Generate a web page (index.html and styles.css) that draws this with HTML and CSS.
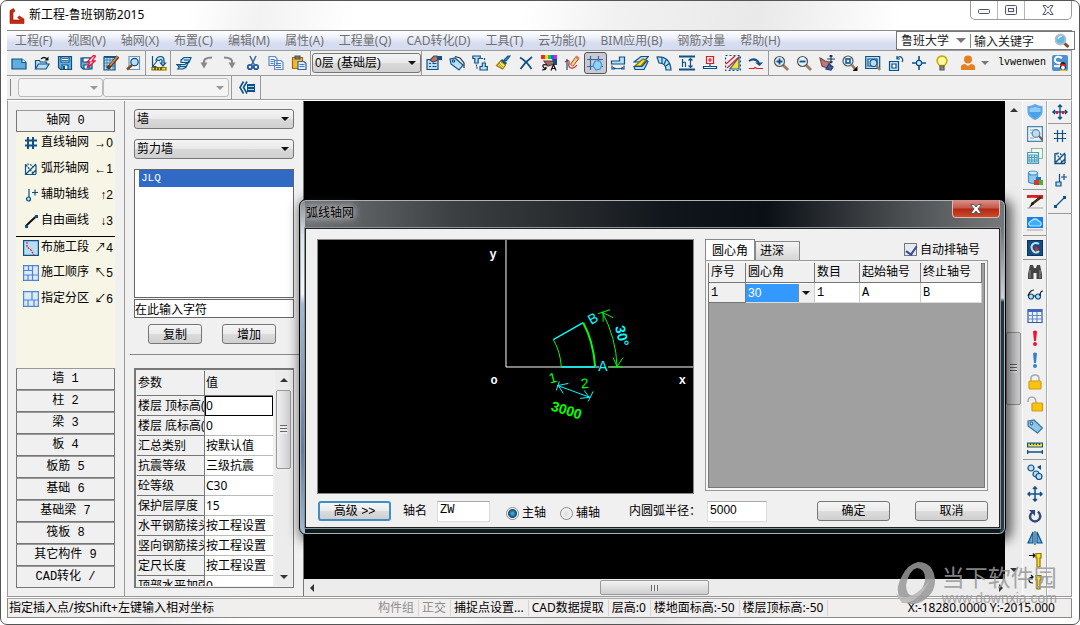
FILE: index.html
```html
<!DOCTYPE html>
<html lang="zh-CN">
<head>
<meta charset="utf-8">
<title>新工程-鲁班钢筋2015</title>
<link rel="stylesheet" href="styles.css">
</head>
<body>
<div class="window">
  <header class="titlebar">
    <svg class="logo" viewBox="0 0 16 16"><path d="M1 2.500L4.500.500 6 3 4 4.500V12h7.500l-3-2.500 2-1.500 4.500 3v4.500H1z" fill="#c8290f" stroke="#8f1c08" stroke-width=".6"/></svg>
    <h1 class="title">新工程-鲁班钢筋2015</h1>
    <div class="winctl">
      <button class="wc" aria-label="最小化"><svg viewBox="0 0 14 12"><rect x="1.500" y="5.500" width="11" height="4" rx="1"/></svg></button>
      <button class="wc" aria-label="还原"><svg viewBox="0 0 14 12"><rect x="1.500" y="1.500" width="11" height="9" rx="1"/><rect x="4.500" y="4.500" width="5" height="3"/></svg></button>
      <button class="wc wide" aria-label="关闭"><svg viewBox="0 0 14 12"><path d="M2 1.500h3L7 4l2-2.500h3L9 6l3 4.500H9L7 8l-2 2.500H2L5 6z"/></svg></button>
    </div>
  </header>

  <nav class="menubar">
    <button>工程(F)</button><button>视图(V)</button><button>轴网(X)</button><button>布置(C)</button><button>编辑(M)</button><button>属性(A)</button><button>工程量(Q)</button><button>CAD转化(D)</button><button>工具(T)</button><button>云功能(I)</button><button>BIM应用(B)</button><button>钢筋对量</button><button>帮助(H)</button>
    <div class="search">
      <button class="scope">鲁班大学<span class="tri"></span></button>
      <input type="text" value="输入关键字" aria-label="搜索">
      <svg class="i" viewBox="0 0 16 16"><path d="M10 10l4.500 4" stroke="#7a4a2a" stroke-width="3"/><circle cx="6.500" cy="6.500" r="5" fill="#5fb8ea" stroke="#b8bfc6" stroke-width="1.800"/><path d="M4 6q1-3 4-2.500" stroke="#e3f4fd"/></svg>
    </div>
  </nav>

  <div class="toolbar">
    <button class="t" aria-label="新建"><svg class="i" viewBox="0 0 16 16"><path class="mb" d="M1 4h10l4 3.500V14H1z"/><path d="M11 4v3.500h4" fill="#fff"/></svg></button>
    <button class="t" aria-label="打开"><svg class="i" viewBox="0 0 16 16"><path class="lb" d="M1.500 14V5.500h4l1 1.500h6v2"/><path class="lb" d="M1.500 14l3-5h10.500l-3 5z"/><path d="M7 4q3-3 6 0" class="k"/><path class="kf" d="M14.500 1.500v4h-4z"/></svg></button>
    <button class="t" aria-label="保存"><svg class="i" viewBox="0 0 16 16"><path class="mb" d="M1.500 1.500h13v13h-11l-2-2z"/><path fill="#fff" d="M4 2h8v5H4z"/><path d="M5 3.500h6M5 5.500h6" stroke-width=".8"/><path fill="#e8f3fb" d="M5 10h6v4.500H5z"/><path class="db" d="M6 11h2v3H6z"/></svg></button>
    <button class="t" aria-label="另存"><svg class="i" viewBox="0 0 16 16"><path class="mb" d="M1 3h11v11H3l-2-2z"/><path fill="#fff" d="M3 3h7v4H3zM4 10h5v4H4z"/><path fill="#fff" stroke="#f01030" stroke-width="1.300" d="M13.500.500L7 7h3l-3 6 8-7h-3l3.500-5z"/></svg></button>
    <button class="t" aria-label="编辑工程"><svg class="i" viewBox="0 0 16 16"><path class="lb" d="M1 2h11v13H1z"/><path d="M1 5h11M1 8h11M1 11h11M4 2v13M7 2v13M10 2v13" stroke-width=".6"/><path class="db" d="M1 1h12v1.800H1z"/><path d="M15 1.500L6 12l-1.500 1.500" stroke="#5b3416" stroke-width="3.400"/><path d="M14.500 1.500L7 10.500" stroke="#d28c4d" stroke-width="1.800"/></svg></button>
    <button class="t" aria-label="预览"><svg class="i" viewBox="0 0 16 16"><path fill="#eef6fb" stroke="#6e95b3" d="M3 1.500h10.500v13H3z"/><circle class="lb" cx="8.500" cy="7" r="3.700"/><path d="M6 10l-5 4.500" stroke="#7f4b1d" stroke-width="2.400"/></svg></button>
    <span class="vs"></span>
    <button class="t" aria-label="计算"><svg class="i" viewBox="0 0 16 16"><path d="M1.500 1v10.500h4"/><path d="M2 11l4-5"/><path class="lb" d="M5 5Q6 1.500 9.500 1.500T13 5v3h1.500L12 11 9.500 8H11V5.500Q10 3.500 8.500 5.500z"/><path class="y" stroke="#8b7300" d="M1 12.500h14v2.500H1z"/><path d="M4 12.500v2.500M7 12.500v2.500M10 12.500v2.500" class="k"/></svg></button>
    <span class="vs"></span>
    <button class="t" aria-label="楼层"><svg class="i" viewBox="0 0 16 16"><path class="lb" d="M5 5L8 2.500h7l-2 5H5zM.800 9.500h8l4-3-3 6-3 1.500h-5l1.500-2z"/><path d="M8 5h5M4 9.500v2h6"/></svg></button>
    <button class="t" aria-label="撤销"><svg class="i" viewBox="0 0 16 16"><path d="M13 2.500Q4 2.500 5 8" stroke="#888" stroke-width="2"/><path d="M1.500 7.500l3.500 6 3.500-6z" fill="#888" stroke="none"/></svg></button>
    <button class="t" aria-label="重做"><svg class="i" viewBox="0 0 16 16"><path d="M2 2.500q9 0 8 5.500" stroke="#888" stroke-width="2"/><path d="M13.500 7.500l-3.500 6-3.500-6z" fill="#888" stroke="none"/></svg></button>
    <button class="t" aria-label="剪切"><svg class="i" viewBox="0 0 16 16"><path d="M5 1l4.500 9M11 1L6.500 10" stroke="#446c98" stroke-width="1.600"/><circle cx="5" cy="12" r="2.200" stroke="#2459a6" stroke-width="1.800"/><circle cx="11" cy="12" r="2.200" stroke="#2459a6" stroke-width="1.800"/></svg></button>
    <button class="t" aria-label="复制"><svg class="i" viewBox="0 0 16 16"><path fill="#eef5fd" stroke="#6688b8" d="M1 1.500h6l2 2v7H1zM6.500 5.500H13l2 2v7H6.500z"/><path d="M8 8.500h5M8 10.500h5M8 12.500h5M2.500 4.500h4M2.500 6.500h3M2.500 8.500h3" stroke="#3c7fd0"/></svg></button>
    <button class="t" aria-label="粘贴"><svg class="i" viewBox="0 0 16 16"><path fill="#f3b928" stroke="#9e6c0c" d="M1.500 2.500h10v11h-10z"/><path fill="#777" stroke="#555" d="M4 1h5v3H4z"/><path fill="#dcecfa" stroke="#3f6396" d="M7 6.500h6l2 2v6H7z"/><path d="M8.500 9.500h5M8.500 11.500h5" stroke="#3c7fd0"/></svg></button>
    <span class="vs"></span>
    <span class="combo floor"><select aria-label="楼层选择"><option>0层 (基础层)</option></select></span>
    <span class="vs"></span>
    <button class="t" aria-label="属性"><svg class="i" viewBox="0 0 16 16"><path class="lb" d="M1 4.500h11v10H1z"/><path d="M3 8.500h2M6.500 8.500h4M3 11.500h2M6.500 11.500h4"/><path d="M4 5l4-4h3l1 4-5 2z" fill="#b07a76" stroke="#6d3d3d"/><path class="db" d="M11 1h5v4h-4z"/></svg></button>
    <button class="t" aria-label="标签"><svg class="i" viewBox="0 0 16 16"><path class="lb" d="M1 4l5-1 8 7-4 5-8-6z"/><circle cx="4.500" cy="6" r="1.200" fill="#fff"/><path d="M6 1.500l5 1.500 4 5v5" stroke="#234"/></svg></button>
    <button class="t" aria-label="替换"><svg class="i" viewBox="0 0 16 16"><path class="lb" d="M.800 1h7.400v2.500h-2V8H2.800V3.500h-2zM10.300 8h3v3.500h2V15H8v-3.500h2.300z"/><path d="M9 3.500h3.500v3M4.500 9.500V13H7" stroke-dasharray="2 1"/></svg></button>
    <button class="t" aria-label="格式刷"><svg class="i" viewBox="0 0 16 16"><path class="mb" d="M15 1l-4 5-2-1 4-4z"/><path class="db" d="M7 4l5 4-1.500 2-5-4z"/><path fill="#ffe568" stroke="#9c7c13" d="M5.500 6l5 4-3 4-6-3.500z"/><path d="M4 8l4 4M3 9l4 4" stroke="#9c7c13" stroke-width=".7"/></svg></button>
    <button class="t" aria-label="删除"><svg class="i" viewBox="0 0 16 16"><path d="M2 2.500q7 4 11.500 11.500M14 2Q7 7 2.500 14" stroke="#124d7e" stroke-width="1.700"/></svg></button>
    <button class="t" aria-label="颜色"><svg class="i" viewBox="0 0 16 16"><path fill="#f22" stroke="none" d="M0 0h4v4H0z"/><path fill="#f5e400" stroke="none" d="M4 0h3v4H4z"/><path fill="#13cc35" stroke="none" d="M7 0h3v4H7z"/><path fill="#245cff" stroke="none" d="M10 0h3v4h-3z"/><path fill="#db1bf0" stroke="none" d="M13 0h3v4h-3z"/><path fill="#a36a66" stroke="#6d3d3d" d="M3 6h9l2 3-7 2z"/><path class="db" d="M11 4h5v6h-3z"/><path class="k" d="M10 15.500l2.500-6 2.500 6M11 13.500h3M6 10q-5-1-4 1.500t3 1q1 2-4 2.500"/></svg></button>
    <button class="t" aria-label="绘制"><svg class="i" viewBox="0 0 16 16"><path d="M1 7q5-3 4 1t2 5 6-3" class="r"/><path d="M3 4v11" /><path d="M13.500 2.500L7.500 10.500" stroke="#8d5b22" stroke-width="4"/><path d="M13 3L8 10" stroke="#ffce86" stroke-width="2.400"/><path d="M12 1.500l3 2.500" stroke="#e57469" stroke-width="2.600"/></svg></button>
    <button class="t on" aria-label="捕捉"><svg class="i" viewBox="0 0 16 16"><path d="M3.500 1v14M11.500 1v14M0 4.500h16M0 11.500h16" stroke="#39699b"/><path d="M8 6l5 0 2 4-2 4-4 1-3-4z" fill="#8ed4fa" stroke="#4594cc"/></svg></button>
    <button class="t" aria-label="翻转"><svg class="i" viewBox="0 0 16 16"><path class="lb" d="M1.500 6h8V2h5v7h-13z"/><path d="M3 12.500q5 2.500 10 0M2 10.500v3.500h3M14 10.500v3.500h-3"/></svg></button>
    <button class="t" aria-label="板编辑"><svg class="i" viewBox="0 0 16 16"><path class="lb" d="M1 7l7-5.500h7.500l-5 5.500z"/><path class="y" d="M3 10l7-6 3 1-5 6H2z" stroke="#83720c"/><path class="lb" d="M1 11.500h8l5-6 1 1-4 8H2z"/></svg></button>
    <button class="t" aria-label="弧形板"><svg class="i" viewBox="0 0 16 16"><path class="lb" d="M1 2q13-1 14 13h-5Q10 8 3 8z"/><path d="M6 2v6.500M10.500 4L8 9.500M13.500 8.500l-4 2.500"/></svg></button>
    <button class="t" aria-label="标高"><svg class="i" viewBox="0 0 16 16"><path d="M0 1.500h16M0 14.500h16" stroke-width="1.800"/><path d="M3.500 4v8M3.500 8q3-2 3 0v4M11.500 3.500v9M9.500 5.500l2-2 2 2M9.500 10.500l2 2 2-2"/></svg></button>
    <button class="t" aria-label="支座"><svg class="i" viewBox="0 0 16 16"><path class="r" d="M4.500 1.500h7v7h-7zM8 3v4M6 5h4"/><path d="M1.500 11.500h13v2h-13zM8 9v2.500"/></svg></button>
    <button class="t" aria-label="三角区"><svg class="i" viewBox="0 0 16 16"><path d="M.500.500h15v15H.500z" stroke-dasharray="2 2"/><path class="y" d="M14 2v12H5z" stroke="#17649d"/><path class="r" d="M1 9l9-8M2 13L14 2"/></svg></button>
    <button class="t" aria-label="旋转"><svg class="i" viewBox="0 0 16 16"><path d="M1 6q6-4 10 2" stroke-width="2"/><path class="db" d="M7 7.500h8l-3.500 3.500z"/><path class="r" d="M1 13.500h5l1-1 2 1h6"/></svg></button>
    <span class="vs"></span>
    <button class="t" aria-label="放大"><svg class="i" viewBox="0 0 16 16"><path d="M10 10l5 5" stroke="#a17a63" stroke-width="2.800"/><circle class="lens" cx="6.500" cy="6.500" r="5"/><path d="M3.500 6.500h6M6.500 3.500v6" stroke-width="1.800"/></svg></button>
    <button class="t" aria-label="缩小"><svg class="i" viewBox="0 0 16 16"><path d="M10 10l5 5" stroke="#a17a63" stroke-width="2.800"/><circle class="lens" cx="6.500" cy="6.500" r="5"/><path d="M3.500 6.500h6" stroke-width="1.800"/></svg></button>
    <button class="t" aria-label="平移"><svg class="i" viewBox="0 0 16 16"><path fill="#b57c79" stroke="#7e4b4b" d="M1 3l2 1 3 2 4 1 1 4-3 2-5-2-1-4z"/><path fill="#3e5b99" stroke="#263f74" d="M10 9l4 3-2 3-5-1z"/><path d="M12 0v8M8 4h8M10.500 1.500L12 0l1.500 1.500M10.500 6.500L12 8l1.500-1.500" stroke="#23365f"/></svg></button>
    <button class="t" aria-label="窗口缩放"><svg class="i" viewBox="0 0 16 16"><path d="M10 10l3 4" stroke="#a17a63" stroke-width="2.800"/><circle class="lens" cx="6" cy="6" r="5"/><path d="M4 4h4v4H4z" stroke-width="1.500"/><path class="kf" d="M15.500 11v5h-5z"/></svg></button>
    <button class="t" aria-label="全图"><svg class="i" viewBox="0 0 16 16"><path class="lb" d="M.700 1.500h14v12h-14z"/><path d="M3 4h9v7H3z" fill="#eaf6fd"/><circle cx="8.500" cy="8" r="3.500" class="lb"/><path d="M11 10.500l4 4.500" stroke="#a17a63" stroke-width="2.400"/></svg></button>
    <button class="t" aria-label="转动视图"><svg class="i" viewBox="0 0 16 16"><path class="lb" d="M1.500 6.500h9v9h-9z"/><path d="M4 9h4v4H4z" fill="#fff"/><path d="M9 4q2-4 5-1 1.500 2 0 4M9 1v3h3"/></svg></button>
    <button class="t" aria-label="定位"><svg class="i" viewBox="0 0 16 16"><path d="M8 1v14M1 8h14" stroke-width="1.600"/><circle cx="8" cy="8" r="2.600" fill="#d9effb"/></svg></button>
    <button class="t" aria-label="提示"><svg class="i" viewBox="0 0 16 16"><path fill="#fff89f" stroke="#cdaa00" stroke-width="1.600" d="M5.500 10.500Q3 8 3 5.500q.500-4 5-4.500 4.500.500 5 4.500 0 2.500-2.500 5z"/><path fill="#888" stroke="#555" d="M6 11h4v4H6z"/></svg></button>
    <button class="user"><svg class="i" viewBox="0 0 16 16"><circle cx="8" cy="4.500" r="4" fill="#e87f20" stroke="none"/><path d="M1 15V11q1-2 4-2l3 2 3-2q3 0 4 2v4z" fill="#e87f20" stroke="none"/></svg><span class="tri"></span><span class="uname">lvwenwen</span></button>
    <button class="t qq" aria-label="客服"><svg class="i" viewBox="0 0 16 16"><rect width="16" height="16" rx="2" fill="#4f91cc" stroke="none"/><path d="M10 3Q4 0 3 4t5 4q3 4-6 3" stroke="#fff" stroke-width="2"/><ellipse cx="11" cy="11" rx="3" ry="4" fill="#222" stroke="none"/><ellipse cx="11" cy="12.500" rx="1.800" ry="2.200" fill="#fff" stroke="none"/><path d="M8 10h6" stroke="#e22" stroke-width="1.600"/><path d="M8 15.500h6" stroke="#fb0" stroke-width="1.400"/></svg></button>
  </div>

  <div class="toolbar second">
    <span class="grip"></span>
    <span class="combo off a"><select disabled aria-label="类别"><option></option></select></span>
    <span class="combo off b"><select disabled aria-label="构件"><option></option></select></span>
    <span class="vs"></span>
    <button class="t list" aria-label="收起"><svg class="i" viewBox="0 0 16 16"><path d="M4.500 1.500L1 7.500l3.500 6M8 1.500L4.500 7.500l3.500 6" stroke-width="1.600"/><path class="db" d="M8 4h8v8H8z"/><path d="M9 6.500h6M9 9.500h6" stroke="#a6d5f0"/></svg></button>
    <span class="vs"></span>
  </div>

  <main class="main">
    <aside class="nav">
      <button class="cat first">轴网 0</button>
      <ul class="cmds">
        <li><svg class="i" viewBox="0 0 16 16"><path d="M5 2v12M10 2v12M2 5.500h12M2 10.500h12" stroke-width="2"/></svg>直线轴网<kbd>→0</kbd></li>
        <li><svg class="i" viewBox="0 0 16 16"><path d="M2.500 3v10.500H13M3 13L13 3M9 13l4-4M13 4v9" /><path d="M3 4l7 8M4 3q4 0 6 3" stroke-dasharray="2 1"/></svg>弧形轴网<kbd>←1</kbd></li>
        <li><svg class="i" viewBox="0 0 16 16"><path d="M6 2v9M9 5.500h6M12 2.500v6"/><circle cx="5.500" cy="12" r="2" class="lb"/></svg>辅助轴线<kbd>↑2</kbd></li>
        <li><svg class="i" viewBox="0 0 16 16"><path d="M3 13L7 9l6-5.500" class="k" stroke-width="2"/><path class="db" d="M2 12h3v3H2zM12 2h3v3h-3z"/></svg>自由画线<kbd>↓3</kbd></li>
        <li class="rule"><svg class="i" viewBox="0 0 16 16"><path class="lb" d="M.600.600h14.800v14.800H.600z"/><path d="M4 2v5l4 3 3 5" class="r" stroke-dasharray="2 1"/></svg>布施工段<kbd>↗4</kbd></li>
        <li><svg class="i bl" viewBox="0 0 16 16"><path d="M.600.600h14.800v14.800H.600zM0 5.500h9M5.500 0v5.500M9.500 0v16M9.500 10h6.500M0 10h9M5 10v6"/></svg>施工顺序<kbd>↖5</kbd></li>
        <li><svg class="i bl" viewBox="0 0 16 16"><path d="M.600.600h14.800v14.800H.600zM0 9h16M9 0v9M5 9v7M11 9v7"/></svg>指定分区<kbd>↙6</kbd></li>
      </ul>
      <button class="cat">墙 1</button><button class="cat">柱 2</button><button class="cat">梁 3</button><button class="cat">板 4</button><button class="cat">板筋 5</button><button class="cat">基础 6</button><button class="cat">基础梁 7</button><button class="cat">筏板 8</button><button class="cat">其它构件 9</button><button class="cat">CAD转化 /</button>
    </aside>

    <section class="props">
      <span class="combo"><select aria-label="构件大类"><option>墙</option></select></span>
      <span class="combo"><select aria-label="构件小类"><option>剪力墙</option></select></span>
      <ul class="listbox"><li>JLQ</li></ul>
      <input class="filter" type="text" value="在此输入字符" aria-label="过滤">
      <div class="pair"><button class="btn">复制</button><button class="btn">增加</button></div>
      <div class="gridbox">
        <div class="gridclip">
          <table class="pgrid">
            <thead><tr><th>参数</th><th>值</th></tr></thead>
            <tbody>
              <tr class="cur"><th>楼层 顶标高(</th><td>0</td></tr>
              <tr><th>楼层 底标高(</th><td>0</td></tr>
              <tr><th>汇总类别</th><td>按默认值</td></tr>
              <tr><th>抗震等级</th><td>三级抗震</td></tr>
              <tr><th>砼等级</th><td>C30</td></tr>
              <tr><th>保护层厚度</th><td>15</td></tr>
              <tr><th>水平钢筋接头</th><td>按工程设置</td></tr>
              <tr><th>竖向钢筋接头</th><td>按工程设置</td></tr>
              <tr><th>定尺长度</th><td>按工程设置</td></tr>
              <tr><th>顶部水平加强</th><td>0</td></tr>
            </tbody>
          </table>
        </div>
        <div class="vscroll"><span class="up"></span><span class="thumb"></span><span class="dn"></span></div>
      </div>
    </section>

    <section class="view">
      <div class="canvas"></div>
      <div class="vscroll big"><span class="up"></span><span class="thumb"></span><span class="dn"></span></div>
      <div class="hscroll"><span class="lf"></span><span class="thumb"></span><span class="rt"></span></div>
    </section>

    <div class="side">
      <button class="t" aria-label="防护"><svg class="i" viewBox="0 0 16 16"><path d="M1 2.500q4 0 7-2 3 2 7 2v6q-1 4-7 7-6-3-7-7z" fill="#4aa3ea" stroke="#73aee0"/><path d="M2.500 4Q6 4 8 2.500q2 1.500 5.500 1.500v4h-11z" fill="#91ccf7" stroke="none"/></svg></button>
      <button class="t" aria-label="查看"><svg class="i" viewBox="0 0 16 16"><path fill="#e9f4fc" stroke="#4d82b3" d="M.600.600h14.800v14.800H.600z"/><path d="M3 4h7M3 7h3M3 12h4" stroke="#7fa9cc"/><circle class="lb" cx="9" cy="7.500" r="3.800" stroke="#6d87a0"/><path d="M12 10l3.500 4" stroke="#765a45" stroke-width="2"/></svg></button>
      <button class="t" aria-label="表格"><svg class="i" viewBox="0 0 16 16"><path fill="#effbec" stroke="#8fba98" d="M4.500.500h11v10h-11z"/><path fill="#e7f6fc" stroke="#4b9cb9" d="M.500 4.500h11v11H.500z"/><path d="M2 7h8v7H2zM2 9.500h8M2 12h8M4.700 7v7M7.500 7v7" stroke="#4b9cb9"/></svg></button>
      <button class="t" aria-label="数据库"><svg class="i" viewBox="0 0 16 16"><path fill="#8ec9ef" stroke="#4a92c8" d="M1.500 3v9q4.500 3 9 0V3z"/><ellipse cx="6" cy="3" rx="4.500" ry="2" fill="#ccebfb" stroke="#4a92c8"/><path fill="#d23b2c" stroke="none" d="M7 10h5v5H7z"/><path fill="#4fae35" stroke="none" d="M12 10h4v5h-4z"/><path fill="#2d6fca" stroke="none" d="M9 7h5v3H9z"/></svg></button>
      <span class="hs"></span>
      <button class="t" aria-label="画笔"><svg class="i" viewBox="0 0 16 16"><path fill="#ccc" stroke="none" d="M0 13h16v2H0z"/><path fill="#d32222" stroke="none" d="M0 1h16v4Q8 3 0 4z"/><path d="M14 3L5 10" stroke="#4b2b16" stroke-width="2.600"/><path class="kf" d="M5 8l2 2-5 4z"/></svg></button>
      <button class="t" aria-label="云"><svg class="i" viewBox="0 0 16 16"><path fill="#1680ed" stroke="none" d="M0 1h16v11H0z"/><path fill="#3ab0ff" stroke="#b9e2ff" d="M3 10q-3-3 1-5 4-4 8 0 4 2 1 5z"/><path fill="#ccc" stroke="none" d="M0 13h16v2H0z"/></svg></button>
      <span class="hs"></span>
      <button class="t" aria-label="云检查"><svg class="i" viewBox="0 0 16 16"><path fill="#174d7d" stroke="#0b355a" d="M.500.500h15v15H.500z"/><path d="M12 4q-3-2-6 0-3 3 0 7 3 3 6 0" stroke="#b9e2ff" stroke-width="2"/><path fill="#d22" stroke="none" d="M8 6l4 3-4 3z"/></svg></button>
      <span class="hs"></span>
      <button class="t" aria-label="查找"><svg class="i" viewBox="0 0 16 16"><path fill="#444" stroke="none" d="M3 1h3l1 3h2l1-3h3l2 9v5H9.500V9h-3v6H1v-5z"/><path d="M3 6v8M13 6v8" stroke="#888"/></svg></button>
      <button class="t" aria-label="显示"><svg class="i" viewBox="0 0 16 16"><circle class="lb" cx="4" cy="10.500" r="2.500"/><circle class="lb" cx="11" cy="10.500" r="2.500"/><path class="k" d="M1 10Q3 4 7 4M6.500 10h2M13 10q0-5 3-5"/></svg></button>
      <button class="t" aria-label="报表"><svg class="i" viewBox="0 0 16 16"><path fill="#eff6ff" stroke="#3457a6" d="M1 1.500h14v13H1z"/><path fill="#3e68bd" stroke="none" d="M1 1h14v3H1z"/><path d="M1 7.500h14M1 11h14M5.500 4v10M10 4v10" stroke="#648ace"/></svg></button>
      <button class="t" aria-label="错误"><svg class="i" viewBox="0 0 16 16"><path class="rf" d="M6 1.500q2-2 4 0L9 11H7z"/><circle class="rf" cx="8" cy="14" r="2"/></svg></button>
      <button class="t" aria-label="信息"><svg class="i" viewBox="0 0 16 16"><path fill="#3284c5" stroke="none" d="M6 1.500q2-2 4 0L9 11H7z"/><circle fill="#3284c5" stroke="none" cx="8" cy="14" r="2"/></svg></button>
      <button class="t" aria-label="锁定"><svg class="i" viewBox="0 0 16 16"><path d="M4 8V4.500Q4 1 8 1t4 3.500V8" stroke="#aaa" stroke-width="1.600"/><rect x="2" y="7" width="12" height="8" rx="1" fill="#fbc20f" stroke="#d39b0b"/></svg></button>
      <button class="t" aria-label="解锁"><svg class="i" viewBox="0 0 16 16"><path d="M1 6q0-5 4-5 4 0 4 6" stroke="#aaa" stroke-width="1.600"/><rect x="5" y="7" width="10.500" height="8" rx="1" fill="#fbc20f" stroke="#d39b0b"/></svg></button>
      <button class="t" aria-label="标注"><svg class="i" viewBox="0 0 16 16"><path fill="#8ec6e9" stroke="#35729f" d="M1 3l6-1 8.500 8-5 5L1 8z"/><circle cx="4.500" cy="5.500" r="1.300" fill="#fff" stroke="#35729f"/></svg></button>
      <button class="t" aria-label="测量"><svg class="i" viewBox="0 0 16 16"><path class="y" d="M.600 3h15v4H.600z"/><path d="M3.500 3v2M6.500 3v2M9.500 3v2M12.500 3v2M0 12h16M.600 10v4M15.400 10v4" stroke-width="1.400"/></svg></button>
      <span class="hs"></span>
      <button class="t" aria-label="复制构件"><svg class="i" viewBox="0 0 16 16"><circle class="lb" cx="4" cy="4" r="3"/><circle class="lb" cx="9" cy="10" r="3"/><circle class="lb" cx="12" cy="12.500" r="3"/><path class="db" d="M14 1v5L10 3z"/></svg></button>
      <button class="t" aria-label="移动"><svg class="i" viewBox="0 0 16 16"><path d="M8 1v14M1 8h14M6 3l2-2 2 2M6 13l2 2 2-2M3 6L1 8l2 2M13 6l2 2-2 2" stroke-width="1.500"/></svg></button>
      <button class="t" aria-label="旋转构件"><svg class="i" viewBox="0 0 16 16"><path d="M5 4.500Q1.500 8 4 11.500q4 4 8 0 3-4-1-8" stroke="#31477f" stroke-width="2.400"/><path fill="#31477f" stroke="none" d="M2 2h6v6z"/></svg></button>
      <button class="t" aria-label="镜像"><svg class="i" viewBox="0 0 16 16"><path d="M8 1v14"/><path class="mb" d="M6 2v11H1zM10 2v11h5z"/></svg></button>
      <button class="t" aria-label="对齐"><svg class="i" viewBox="0 0 16 16"><path class="k" d="M2 3.500h6M6 1.500l2 2-2 2"/><path class="y" stroke="#8a7600" d="M9 1.500h5V6h-1v9h-3V6H9z"/></svg></button>
      <button class="t" aria-label="偏转"><svg class="i" viewBox="0 0 16 16"><path class="k" d="M6 9Q2 9 2 6t4-3M4 1l2 2-2 2"/><path class="y" stroke="#8a7600" d="M9 1.500h5V6h-1v9h-3V6H9z"/></svg></button>
    </div>

    <div class="side outer">
      <button class="t" aria-label="全向移动"><svg class="i" viewBox="0 0 16 16"><path d="M8 1v14M1 8h14M6 3l2-2 2 2M6 13l2 2 2-2M3 6L1 8l2 2M13 6l2 2-2 2" stroke-width="1.400"/><path class="rf" d="M4 7h2v3H4zM10 7h2v3h-2z"/></svg></button>
      <span class="hs"></span>
      <button class="t" aria-label="直线轴网"><svg class="i" viewBox="0 0 16 16"><path d="M5.500 2v12M10.500 2v12M2 5.500h12M2 10.500h12" stroke-width="1.200"/></svg></button>
      <button class="t" aria-label="弧形轴网"><svg class="i" viewBox="0 0 16 16"><path d="M3 3v10.500h10M3 13L13 3M9 13l4-4M13 4v9" stroke-width="1.400"/><path d="M4 3l6 9M5 3q4 0 5 3" stroke-dasharray="2 1"/></svg></button>
      <button class="t" aria-label="辅助轴线"><svg class="i" viewBox="0 0 16 16"><path d="M7.500 2v8M9 5h6M12 2v6"/><path class="lb" d="M4 10h5v4H4z"/></svg></button>
      <button class="t" aria-label="画线"><svg class="i" viewBox="0 0 16 16"><path d="M3.500 12.500l9-9"/><path class="db" d="M2 11h3v3H2zM11 2h3v3h-3z"/></svg></button>
      <span class="hs"></span>
    </div>
  </main>

  <footer class="status">
    <span class="msg">指定插入点/按Shift+左键输入相对坐标</span>
    <span class="st dim">构件组</span><span class="st dim">正交</span><span class="st">捕捉点设置...</span><span class="st">CAD数据提取</span><span class="st">层高:0</span><span class="st">楼地面标高:-50</span><span class="st">楼层顶标高:-50</span>
    <span class="xy">X:-18280.0000 Y:-2015.000</span>
  </footer>

  <div class="dialog" role="dialog" aria-label="弧线轴网">
    <div class="dtitle"><h2>弧线轴网</h2><button class="dclose" aria-label="关闭对话框"><svg viewBox="0 0 14 12"><path d="M1.500 1.500h3.500L7 4l2-2.500h3.500L9 6l3.500 4.500H9L7 8l-2 2.500H1.500L5 6z" fill="#fff" stroke="#555"/></svg></button></div>
    <div class="client">
      <div class="upper">
        <svg class="preview" viewBox="0 0 376 254">
          <g fill="none" stroke="#fff"><path d="M188.500 0v127.500H282M291 127.500h86"/></g>
          <g fill="#fff" class="ax"><text x="172" y="18">y</text><text x="173" y="145">o</text><text x="362" y="145">x</text></g>
          <g fill="none" stroke="#0ff"><path d="M236 100l30-17M244 127.500h34" stroke-width="1.300"/><path d="M240 146l33 12M251 144l-10 2 5 8M263 159l9-1-5-7M242 142l-3 9M276 152l-5 10"/></g>
          <g fill="none" stroke="#0f0"><path d="M236 100q7 12 8 27"/><path d="M266 83q10 18 12 44" stroke-width="2"/><path d="M285 72q14 26 15 55M281 74l12-4M286 82v-9l10 5M294 127.500h12M296 118l4 9 6-9"/></g>
          <text class="lt" fill="#0ff" x="-4" y="5" transform="translate(275 79) rotate(-30)">B</text>
          <text class="lt" fill="#0ff" x="281" y="132">A</text>
          <text class="lt" fill="#0f0" transform="translate(233 144) rotate(-15)">1</text>
          <text class="lt" fill="#0f0" transform="translate(264 149) rotate(-5)">2</text>
          <text class="bd" fill="#0ff" transform="translate(298 87) rotate(77)">30°</text>
          <text class="bd" fill="#0f0" transform="translate(233 171) rotate(17)">3000</text>
        </svg>
        <div class="tabs">
          <div class="tabrow">
            <button class="tab sel">圆心角</button><button class="tab">进深</button>
            <label class="auto"><input type="checkbox" checked>自动排轴号</label>
          </div>
          <div class="pane">
            <table class="dgrid">
              <thead><tr><th class="c1">序号</th><th class="c2">圆心角</th><th class="c3">数目</th><th>起始轴号</th><th>终止轴号</th></tr></thead>
              <tbody><tr><th>1</th><td class="cell"><span class="combo mini"><select aria-label="圆心角"><option>30</option></select></span></td><td>1</td><td>A</td><td>B</td></tr></tbody>
            </table>
          </div>
        </div>
      </div>
      <div class="lower">
        <button class="btn adv">高级 &gt;&gt;</button>
        <label class="nm">轴名<input type="text" value="ZW"></label>
        <label class="rd"><input type="radio" name="axis" checked>主轴</label>
        <label class="rd"><input type="radio" name="axis">辅轴</label>
        <label class="rad">内圆弧半径：<input type="text" value="5000"></label>
        <button class="btn ok">确定</button>
        <button class="btn">取消</button>
      </div>
    </div>
  </div>

  <div class="mark">
    <svg viewBox="0 0 44 46"><path d="M24 2q16 0 17 19 0 13-14 21-12 5-20-2Q0 30 8 16 14 4 24 2zm-1 6q-8 2-11 17 0 10 7 11 9-3 12-15 1-12-8-13z" fill="#999" fill-rule="evenodd"/><path d="M2 34q14 10 34-14Q24 44 8 43z" fill="#b5b5b5"/></svg>
    <div><b>当下软件园</b><i>www.downxia.com</i></div>
  </div>
</div>
</body>
</html>
```

FILE: styles.css
```css
* { box-sizing: border-box; }
html, body { height: 100%; margin: 0; }
body {
  background: #fff;
  color: #000;
  font: 12px/16px "Noto Sans", "Noto Sans CJK SC", sans-serif;
  overflow: hidden;
}
button, input, select { font: inherit; color: inherit; margin: 0; padding: 0; border-radius: 0; }
button { background: none; border: 0; white-space: nowrap; }
ul { list-style: none; margin: 0; padding: 0; }
h1, h2 { margin: 0; font: inherit; }
th { font-weight: normal; text-align: left; }

.window {
  position: relative;
  height: 100vh;
  display: flex;
  flex-direction: column;
  padding: 0 7px 6px 6px;
  border: 1px solid #555;
  border-radius: 7px;
  background: linear-gradient(100deg, #fff 0, #fff 16%, #f2f2f2 22%, #fff 30%, #fff 44%, #f1f1f1 52%, #e9e9e9 64%, #fff 76%);
}

/* Title bar */
.titlebar { display: flex; align-items: flex-start; height: 29px; flex: none; }
.logo { width: 16px; height: 16px; margin: 7px 4px 0 2px; }
.title { padding-top: 6px; flex: 1; }
.winctl { display: flex; border: 1px solid #9b9b9b; border-top: 0; border-radius: 0 0 5px 5px; height: 19px; }
.wc { width: 27px; border-right: 1px solid #b5b5b5; display: flex; justify-content: center; align-items: center; }
.wc.wide { width: 46px; border-right: 0; }
.wc svg { width: 14px; height: 12px; fill: #f6f6f6; stroke: #53566a; }

/* Menu */
.menubar {
  display: flex; align-items: center; gap: 15px; flex: none;
  height: 20px; padding-left: 8px;
  border-top: 1px solid #8a8a8a;
  background: linear-gradient(#fff, #eef1fa 35%, #d9dff1 60%, #d4dbef);
  color: #707070;
}
.search {
  margin-left: auto; margin-right: -3px; display: flex; align-items: center;
  width: 179px; height: 19px; background: #fff; border: 1px solid #777; color: #222; padding: 0 4px;
}
.scope { display: flex; align-items: center; gap: 7px; padding-right: 4px; border-right: 1px solid #888; height: 14px; }
.search input { border: 0; outline: 0; flex: 1; min-width: 0; padding-left: 3px; background: none; height: 17px; }
.tri { border: 5px solid transparent; border-top-color: #777; border-bottom: 0; width: 0; height: 0; }

/* Toolbars */
.toolbar {
  display: flex; align-items: center; height: 25px; flex: none;
  background: #f0f0f0; border-top: 1px solid #9c9c9c; border-right: 1px solid #999;
}
.t { width: 23px; height: 22px; display: flex; align-items: center; justify-content: center; flex: none; }
.t.on { border: 1px solid #555; border-radius: 3px; background: #c9c9d6; }
.i { width: 16px; height: 16px; fill: none; stroke: #0d5187; stroke-width: 1.2; display: block; flex: none; }
.lb { fill: #b9def4; }
.mb { fill: #61aede; }
.db { fill: #0d5187; stroke: none; }
.r { stroke: #e01b24; }
.rf { fill: #f01030; stroke: none; }
.y { fill: #ffdf2b; }
.k { stroke: #111; }
.kf { fill: #111; stroke: none; }
.lens { fill: #dff1fb; stroke: #555; }
.vs { width: 1px; margin-right: 1px; height: 24px; background: #999; flex: none; }
.user { display: flex; align-items: center; margin-left: 6px; gap: 5px; }
.user .tri { border-width: 4px; border-bottom-width: 0; }
.uname { font: 10px/16px "Liberation Mono", monospace; padding-left: 4px; }
.qq { margin-left: 2px; }
.second { border-bottom: 1px solid #999; padding-left: 3px; }
.second .vs { margin-left: 2px; }
.second .combo { height: 19px; }
.second .combo select { height: 17px; }
.grip { width: 1px; height: 17px; background: #888; margin-right: 7px; }
.list { margin-left: 2px; }

.combo {
  position: relative; display: block; height: 20px;
  border: 1px solid #777; border-radius: 3px;
  background: linear-gradient(#f4f4f4, #e9e9e9 48%, #d9d9d9 52%, #d0d0d0);
}
.combo::after {
  content: ""; position: absolute; right: 4px; top: 7px; pointer-events: none;
  border: 4px solid transparent; border-top-color: #111; border-bottom: 0;
}
.combo select {
  appearance: none; display: block; width: 100%; height: 18px; padding-left: 2px;
  border: 0; outline: 0; background: none; line-height: 16px;
}
.floor { width: 113px; }
.floor select { font-family: "Liberation Sans", "Noto Sans CJK SC", sans-serif; }
.off { border-color: #bbb; background: #f4f4f4; }
.off::after { border-top-color: #999; }
.a { width: 85px; }
.b { width: 126px; }

/* Work area */
.main {
  flex: 1; min-height: 0; display: flex;
  background: #f0f0f0; border: 1px solid #999; border-top-color: #fff;
}
.nav {
  width: 117px; flex: none; padding: 9px 9px 8px 8px; display: flex; flex-direction: column;
  border-right: 1px solid #999;
  font-family: "Liberation Mono", "Noto Sans CJK SC", monospace;
}
.cat { height: 22px; line-height: 20px; border: 1px solid #777; border-top-color: #999; background: #f0f0f0; flex: none; }
.cmds { flex: 1; background: #f7f5e6; min-height: 0; }
.cmds li { height: 26px; display: flex; align-items: center; padding: 0 2px 4px 7px; gap: 2px; white-space: nowrap; }
.cmds li.rule { border-top: 1px solid #000; }
.cmds kbd { margin-left: auto; font: 12px/16px "Liberation Sans", "Noto Sans CJK SC", sans-serif; }
.bl { stroke: #4e86d6; fill: #dcebfb; }

.props { width: 178px; flex: none; padding: 8px 9px 8px 9px; display: flex; flex-direction: column; }
.props > .combo { margin-bottom: 10px; flex: none; }
.listbox { height: 129px; border: 1px solid #666; background: #fff; flex: none; }
.listbox li { background: #316ac5; color: #fff; margin-left: 4px; height: 17px; padding-left: 2px; font: 11px/17px "Liberation Mono", monospace; }
.filter { height: 19px; border: 1px solid #666; background: #fff; padding-left: 0; margin-top: 1px; width: 100%; flex: none; outline: 0; }
.pair { display: flex; gap: 20px; padding: 6px 14px 10px 18px; margin: 0 -8px 13px -4px; border-bottom: 1px solid #888; flex: none; }
.btn {
  width: 54px; height: 20px; border: 1px solid #777; border-radius: 3px; line-height: 17px; flex: none;
  background: linear-gradient(#f5f5f5, #ebebeb 48%, #dcdcdc 52%, #cfcfcf);
}
.gridbox { flex: 1; min-height: 0; border: 2px solid #777; border-right: 1px solid #777; border-bottom: 1px solid #777; display: flex; padding: 1px; }
.gridclip { flex: 1; overflow: hidden; }
.pgrid { width: 136px; table-layout: fixed; border-collapse: separate; border-spacing: 0; }
.pgrid th, .pgrid td { height: 20px; padding: 0 1px; line-height: 18px; white-space: nowrap; overflow: hidden; border-right: 1px solid #777; border-bottom: 1px solid #777; }
.pgrid thead th { height: 25px; }
.pgrid thead th:last-child { border-right: 0; }
.pgrid td { background: #fff; border-right: 0; border-bottom-color: #bbb; }
.pgrid .cur td { border: 1px solid #000; padding: 0; }

.vscroll { width: 17px; flex: none; display: flex; flex-direction: column; align-items: center; background: #ececec; }
.up, .dn, .lf, .rt { width: 0; height: 0; border: 4px solid transparent; flex: none; }
.up { border-bottom-color: #333; border-top: 0; margin: 7px 0 8px; }
.dn { border-top-color: #333; border-bottom: 0; margin: auto 0 7px; }
.thumb { border: 1px solid #999; border-radius: 2px; background: repeating-linear-gradient(#666 0 1px, #eee 1px 3px) center / 7px 9px no-repeat, linear-gradient(90deg, #f0f0f0, #d0d0d4); }
.vscroll .thumb { width: 15px; height: 79px; }
.view { flex: 1; min-width: 0; display: grid; grid-template: minmax(0, 1fr) 17px / minmax(0, 1fr) 17px; border-left: 1px solid #777; }
.canvas { background: #000; }
.big .thumb { height: 73px; margin-top: 212px; }
.hscroll { grid-column: 1 / 3; display: flex; align-items: center; background: #ececec; }
.lf { border-right-color: #333; border-left: 0; margin-left: 6px; }
.rt { border-left-color: #333; border-right: 0; margin: 0 19px 0 auto; }
.hscroll .thumb { height: 15px; width: 109px; margin-left: 286px; background: repeating-linear-gradient(90deg, #666 0 1px, #eee 1px 3px) center / 8px 6px no-repeat, linear-gradient(#f2f2f2, #cfcfd3); }

.side { width: 25px; flex: none; border-right: 1px solid #aaa; border-left: 1px solid #fff; display: flex; flex-direction: column; align-items: center; }
.outer { width: 24px; border-right: 0; }
.hs { height: 1px; align-self: stretch; background: #999; margin: 0 0 1px; flex: none; }

/* Status bar */
.status { display: flex; align-items: center; height: 20px; flex: none; margin-top: 1px; background: #f1eeee; border: 1px solid #888; border-top-color: #aaa; white-space: nowrap; }
.msg { width: 367px; padding-left: 1px; flex: none; }
.st { padding: 0 4px 0 3px; border-right: 1px solid #d5d5d5; }
.dim { color: #8d8d8d; }
.xy { margin-left: auto; padding-right: 16px; }

/* Dialog */
.dialog {
  position: absolute; left: 298px; top: 198px; width: 707px;
  border: 1px solid #000; border-radius: 7px; padding: 0 5px 6px;
  background:
    linear-gradient(#828990, #dde4ec 35px, #f4f8fb 94px, #a2bad2 104px, #5f7f9e 75%, #9cbad6) left / 5px 100% no-repeat,
    linear-gradient(#71767a 30px, #d0d4d8 98px, #1c3342 102px, #233a4b) right / 5px 100% no-repeat,
    linear-gradient(#0000 300px, #0c1a1c 300px),
    linear-gradient(90deg, #6f7275, #55585b 12%, #3c3f42 22%, #25282b 40%, #10161c 52%, #0a0f16 66%, #4d5052 86%, #77797b);
  box-shadow: inset 0 0 0 1px #aab2ba, 3px 3px 12px 3px rgba(0, 0, 0, .6);
}
.dtitle { display: flex; height: 28px; align-items: flex-start; justify-content: space-between; }
.dtitle h2 { padding: 5px 6px 0 1px; text-shadow: 0 0 6px #ccc, 0 0 9px #ccc, 0 0 12px #aaa; }
.dclose { width: 48px; height: 18px; border: 1px solid #e2b6b0; border-top: 0; border-radius: 0 0 4px 4px; background: linear-gradient(#d99288, #c5574a 48%, #b02810 52%, #cc4a2c); display: flex; align-items: center; justify-content: center; }
.dclose svg { width: 14px; height: 12px; }
.client { background: #f0f0f0; border: 1px solid #222; outline: 1px solid #8d9296; padding: 10px 11px 0; }
.upper { display: flex; gap: 11px; }
.preview { width: 377px; height: 255px; background: #000; border: 1px solid #888; flex: none; }
.ax { font: bold 12px "Liberation Mono", monospace; }
.lt { font: 14px "Liberation Sans", sans-serif; }
.bd { font: bold 14px "Liberation Sans", sans-serif; }
.tabs { flex: 1; min-width: 0; display: flex; flex-direction: column; }
.tabrow { display: flex; align-items: flex-end; height: 21px; }
.tab { height: 19px; padding: 0 15px 0 4px; border: 1px solid #888; border-bottom: 0; background: linear-gradient(#f3f3f3, #d6d6d6); line-height: 18px; }
.tab.sel { height: 22px; padding: 0 6px; background: #fff; margin-bottom: -1px; }
.auto { margin-left: auto; margin-right: 8px; display: flex; align-items: center; gap: 3px; height: 21px; }
.auto input { appearance: none; position: relative; width: 13px; height: 13px; border: 1px solid #777; background: #e6e9f0; }
.auto input:checked::after { content: ""; position: absolute; left: 3px; top: 0; width: 5px; height: 9px; border: solid #3b4c9c; border-width: 0 2px 2px 0; transform: rotate(35deg); }
.pane { flex: 1; border: 1px solid #999; background: #a0a0a0; padding: 2px; margin-bottom: 3px; box-shadow: inset 0 0 0 2px #f5f5f5, inset 0 0 0 3px #777; }
.dgrid { border-collapse: separate; border-spacing: 0; table-layout: fixed; width: 273px; font-family: "Liberation Mono", "Noto Sans CJK SC", monospace; margin-left: 1px; }
.dgrid th, .dgrid td { height: 20px; padding: 0 2px; line-height: 18px; white-space: nowrap; border-right: 1px solid #777; border-bottom: 1px solid #777; background: #f0f0f0; }
.dgrid td { background: #fff; border-right-color: #ccc; border-bottom-color: #ddd; }
.c1 { width: 37px; }
.c2 { width: 69px; }
.c3 { width: 45px; }
.dgrid .cell { padding: 0; }
.mini { height: 18px; border: 0; border-radius: 0; background: linear-gradient(90deg, #3399ff 52px, #888 52px 53px, #eee 53px); }
.mini select { color: #fff; font-family: "Liberation Sans", sans-serif; }
.lower { display: flex; align-items: center; padding-top: 1px; height: 33px; font-family: "Liberation Sans", "Noto Sans CJK SC", sans-serif; }
.lower .btn { width: 73px; }
.lower .adv { border: 2px solid #3d8fc4; line-height: 15px; margin: 0 12px 0 1px; }
.lower label { display: flex; align-items: center; white-space: nowrap; flex: none; }
.lower input[type="text"] { height: 21px; border: 1px solid #ddd; border-top-color: #aaa; background: #fff; padding: 0 2px 2px; outline: 0; }
.nm { gap: 10px; margin-right: 16px; }
.nm input { width: 53px; font-family: "Liberation Mono", monospace; }
.rd { gap: 3px; margin-right: 14px; padding-top: 4px; }
.rd + .rd { margin-right: 29px; }
.rd input { appearance: none; width: 13px; height: 13px; border: 1px solid #888; border-radius: 50%; background: radial-gradient(#ddd, #fff); }
.rd input:checked { background: radial-gradient(circle, #35a6d8 0 1px, #14466f 4px, #fff 5px); }
.rad { gap: 6px; }
.rad input { width: 60px; }
.ok { margin: 0 25px 0 auto; }

/* Watermark */
.mark { position: absolute; right: 22px; bottom: 18px; display: flex; align-items: center; gap: 4px; color: #999; opacity: .85; pointer-events: none; }
.mark svg { width: 44px; height: 46px; }
.mark b { display: block; font: 23px/30px "Noto Sans CJK SC", sans-serif; }
.mark i { display: block; font: 14px/14px "Liberation Sans", sans-serif; }
```
